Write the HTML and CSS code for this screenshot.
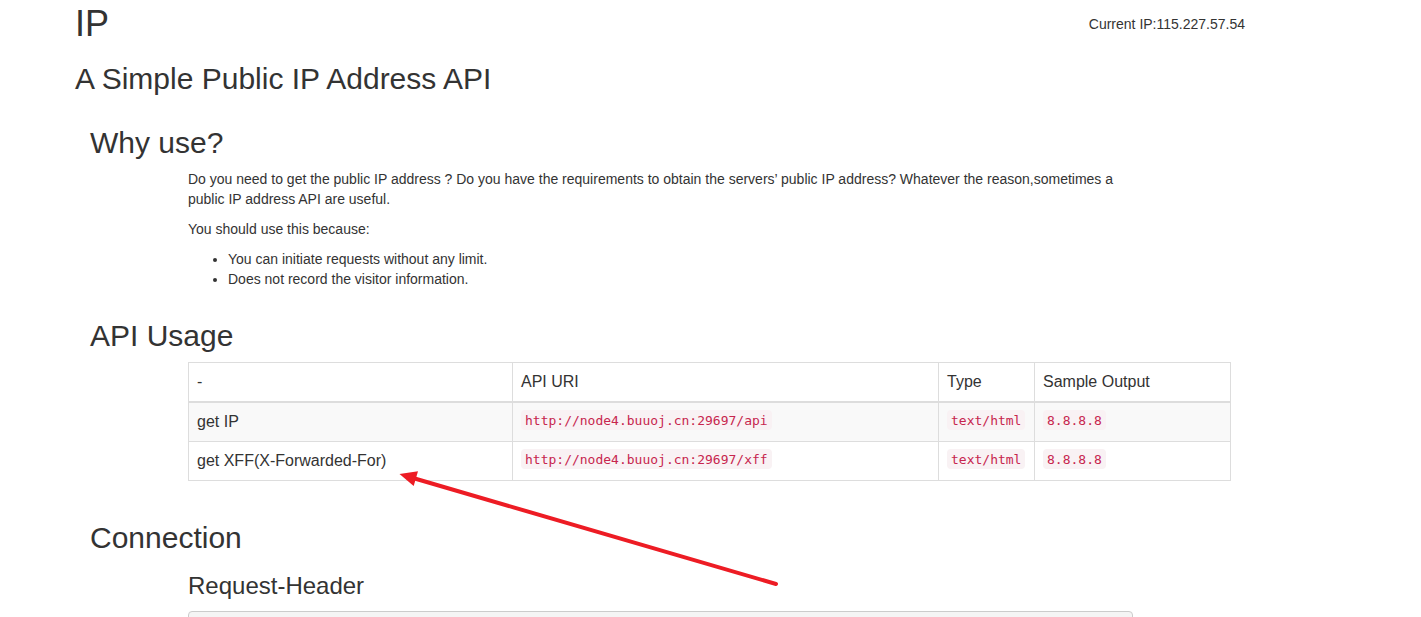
FILE: index.html
```html
<!DOCTYPE html>
<html lang="en">
<head>
<meta charset="utf-8">
<title>IP</title>
<link rel="stylesheet" href="styles.css">
</head>
<body>
<div class="page">
  <header class="topbar">
    <h1 class="site-title">IP</h1>
    <span class="current-ip">Current IP:115.227.57.54</span>
  </header>
  <h2 class="subtitle">A Simple Public IP Address API</h2>

  <section class="section section-why">
    <h2 class="section-title">Why use?</h2>
    <div class="section-body">
      <p>Do you need to get the public IP address ? Do you have the requirements to obtain the servers’ public IP address? Whatever the reason,sometimes a public IP address API are useful.</p>
      <p>You should use this because:</p>
      <ul class="features">
        <li>You can initiate requests without any limit.</li>
        <li>Does not record the visitor information.</li>
      </ul>
    </div>
  </section>

  <section class="section section-usage">
    <h2 class="section-title">API Usage</h2>
    <div class="section-body">
      <table class="api-table">
        <colgroup>
          <col class="col-name">
          <col class="col-uri">
          <col class="col-type">
          <col class="col-out">
        </colgroup>
        <thead>
          <tr><th>-</th><th>API URI</th><th>Type</th><th>Sample Output</th></tr>
        </thead>
        <tbody>
          <tr>
            <td>get IP</td>
            <td><code>http://node4.buuoj.cn:29697/api</code></td>
            <td><code>text/html</code></td>
            <td><code>8.8.8.8</code></td>
          </tr>
          <tr>
            <td>get XFF(X-Forwarded-For)</td>
            <td><code>http://node4.buuoj.cn:29697/xff</code></td>
            <td><code>text/html</code></td>
            <td><code>8.8.8.8</code></td>
          </tr>
        </tbody>
      </table>
    </div>
  </section>

  <section class="section section-conn">
    <h2 class="section-title">Connection</h2>
    <div class="section-body">
      <h3 class="sub-title">Request-Header</h3>
      <pre class="header-dump">GET / HTTP/1.1
Host: node4.buuoj.cn:29697
Connection: keep-alive</pre>
    </div>
  </section>
</div>

<svg class="annotation" width="1421" height="617" viewBox="0 0 1421 617" aria-hidden="true">
  <line x1="776" y1="584" x2="413" y2="478" stroke="#ed1c24" stroke-width="4" stroke-linecap="round"/>
  <polygon points="399.5,474 418,471.3 413.7,486" fill="#ed1c24"/>
</svg>
</body>
</html>
```

FILE: styles.css
```css
html, body {
  margin: 0;
  background: #fff;
}

body {
  position: relative;
  font-family: "Liberation Sans", Arial, sans-serif;
  font-size: 14px;
  line-height: 20px;
  color: #333;
}

.page {
  display: flex;
  flex-direction: column;
  width: 1170px;
  padding-left: 75px;
}

.topbar {
  display: flex;
  justify-content: space-between;
  align-items: flex-start;
}

.site-title {
  margin: 4.4px 0 0;
  font-size: 36px;
  line-height: 1.1;
  font-weight: 400;
}

.current-ip {
  margin-top: 14.4px;
  font-size: 14px;
  line-height: 20px;
}

.subtitle {
  margin: 18.4px 0 0;
  font-size: 30px;
  line-height: 1.1;
  font-weight: 400;
}

.section {
  display: flow-root;
  padding-left: 15px;
}

.section-why { margin-top: 31px; }
.section-usage { margin-top: 20px; }
.section-conn { margin-top: 40px; }

.section-title {
  margin: 0 0 10px;
  font-size: 30px;
  line-height: 1.1;
  font-weight: 400;
}

.section-body {
  margin-left: 98px;
  width: 945px;
}

.section-body p {
  margin: 0 0 10px;
}

.features {
  margin: 0 0 10px;
  padding-left: 40px;
}

.api-table {
  border-collapse: collapse;
  table-layout: fixed;
  width: 1042px;
  font-size: 16px;
  line-height: 22px;
}

.col-name { width: 324px; }
.col-uri { width: 426px; }
.col-type { width: 96px; }
.col-out { width: 196px; }

.api-table th,
.api-table td {
  padding: 8px;
  border: 1px solid #ddd;
  text-align: left;
  vertical-align: top;
  font-weight: 400;
}

.api-table thead th {
  border-bottom-width: 2px;
  vertical-align: bottom;
}

.api-table tbody tr:nth-child(odd) {
  background: #f9f9f9;
}

.api-table code {
  font-family: "DejaVu Sans Mono", "Liberation Mono", monospace;
  font-size: 13px;
  line-height: 1;
  vertical-align: 2px;
  padding: 3px 4px 2px;
  color: #c7254e;
  background: #f9f2f4;
  border-radius: 4px;
}

.sub-title {
  margin: 19px 0 11px;
  font-size: 24px;
  line-height: 1.1;
  font-weight: 400;
}

.header-dump {
  margin: 0;
  padding: 9.5px;
  border: 1px solid #ccc;
  border-radius: 4px;
  background: #f5f5f5;
  font-family: "DejaVu Sans Mono", "Liberation Mono", monospace;
  font-size: 13px;
  line-height: 1.42857;
  color: #333;
}

.annotation {
  position: absolute;
  left: 0;
  top: 0;
  pointer-events: none;
}
```
